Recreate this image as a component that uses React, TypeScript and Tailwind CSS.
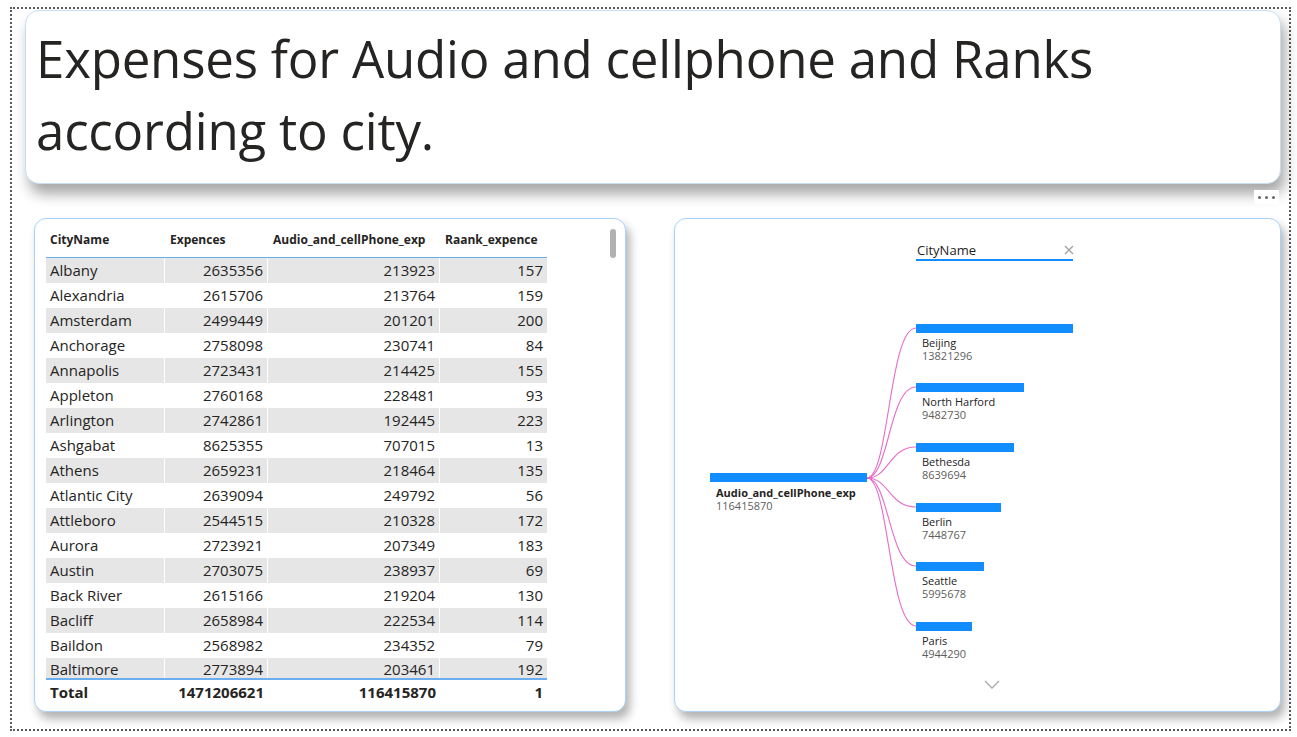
import React from 'react';

const rows: [string, string, string, string][] = [
  ['Albany', '2635356', '213923', '157'],
  ['Alexandria', '2615706', '213764', '159'],
  ['Amsterdam', '2499449', '201201', '200'],
  ['Anchorage', '2758098', '230741', '84'],
  ['Annapolis', '2723431', '214425', '155'],
  ['Appleton', '2760168', '228481', '93'],
  ['Arlington', '2742861', '192445', '223'],
  ['Ashgabat', '8625355', '707015', '13'],
  ['Athens', '2659231', '218464', '135'],
  ['Atlantic City', '2639094', '249792', '56'],
  ['Attleboro', '2544515', '210328', '172'],
  ['Aurora', '2723921', '207349', '183'],
  ['Austin', '2703075', '238937', '69'],
  ['Back River', '2615166', '219204', '130'],
  ['Bacliff', '2658984', '222534', '114'],
  ['Baildon', '2568982', '234352', '79'],
  ['Baltimore', '2773894', '203461', '192'],
];

const children = [
  { name: 'Beijing', value: '13821296', y: 105, w: 157 },
  { name: 'North Harford', value: '9482730', y: 164, w: 108 },
  { name: 'Bethesda', value: '8639694', y: 224, w: 98 },
  { name: 'Berlin', value: '7448767', y: 284, w: 85 },
  { name: 'Seattle', value: '5995678', y: 343, w: 68 },
  { name: 'Paris', value: '4944290', y: 403, w: 56 },
];

const font = { fontFamily: '"Open Sans", "Noto Sans", sans-serif' };

function ExpenseTable() {
  return (
    <div className="relative h-[494px] w-[592px] rounded-[12px] border border-[#a8d2f8] bg-white pl-[11px] pt-[9px] shadow-[4px_7px_10px_rgba(0,0,0,0.3)]">
      <div className="absolute left-[575px] top-[10px] h-[29px] w-[6px] rounded-full bg-[#b1b1b1]" />
      <div className="w-[501px] text-[#252423]">
        <div className="flex h-[30px] items-center border-b border-[#6aaef0] pb-[6px] text-[12px] font-bold">
          <div className="w-[119px] pl-[4px]">CityName</div>
          <div className="w-[103px] pl-[5px]">Expences</div>
          <div className="w-[172px] pl-[5px]">Audio_and_cellPhone_exp</div>
          <div className="w-[107px] pl-[5px]">Raank_expence</div>
        </div>
        <div className="text-[15px]">
          {rows.map((r, i) => {
            const last = i === rows.length - 1;
            return (
              <div
                key={r[0]}
                className={`flex ${last ? 'h-[20px] leading-[23px]' : 'h-[25px] leading-[25px]'} ${i % 2 === 0 ? 'bg-[#e6e6e6]' : 'bg-white'}`}
              >
                <div className="h-full w-[119px] border-r border-white pl-[4px]">{r[0]}</div>
                <div className="h-full w-[103px] border-r border-white pr-[4px] text-right">{r[1]}</div>
                <div className="h-full w-[172px] border-r border-white pr-[4px] text-right">{r[2]}</div>
                <div className="h-full w-[107px] pr-[4px] text-right">{r[3]}</div>
              </div>
            );
          })}
        </div>
        <div className="flex h-[26px] items-end border-t-2 border-[#6aaef0] pb-[2px] text-[15px] font-bold leading-[20px]">
          <div className="w-[119px] pl-[4px]">Total</div>
          <div className="w-[103px] pr-[4px] text-right">1471206621</div>
          <div className="w-[172px] pr-[4px] text-right">116415870</div>
          <div className="w-[107px] pr-[4px] text-right">1</div>
        </div>
      </div>
    </div>
  );
}

function DecompTree() {
  const rootX = 192;
  const rootY = 259;
  return (
    <div className="relative h-[494px] w-[607px] rounded-[12px] border border-[#a8d2f8] bg-white shadow-[4px_7px_10px_rgba(0,0,0,0.3)]">
      <svg width="607" height="494" className="absolute left-0 top-0" style={font}>
        <text x="242" y="36" fontSize="13" fill="#252423">CityName</text>
        <path d="M390 27 L398 35 M398 27 L390 35" stroke="#a0a0a0" strokeWidth="1.3" />
        <rect x="241" y="40" width="157" height="2" fill="#118dff" />

        {children.map((c) => (
          <path
            key={c.name}
            d={`M${rootX} ${rootY} C ${rootX + 22} ${rootY}, ${rootX + 22} ${c.y + 4}, 241 ${c.y + 4}`}
            fill="none"
            stroke="#e66cc8"
            strokeWidth="1.1"
          />
        ))}

        <rect x="35" y="254" width="157" height="9" fill="#118dff" />
        <text x="41" y="278" fontSize="11" fontWeight="700" fill="#252423">Audio_and_cellPhone_exp</text>
        <text x="41" y="291" fontSize="11" fill="#605e5c">116415870</text>

        {children.map((c) => (
          <g key={c.name + 'b'}>
            <rect x="241" y={c.y} width={c.w} height="9" fill="#118dff" />
            <text x="247" y={c.y + 23} fontSize="11" fill="#252423">{c.name}</text>
            <text x="247" y={c.y + 36} fontSize="11" fill="#605e5c">{c.value}</text>
          </g>
        ))}

        <path d="M310 462 L317 469 L324 462" fill="none" stroke="#a8a8a8" strokeWidth="1.3" />
      </svg>
    </div>
  );
}

export default function App() {
  return (
    <div className="h-[737px] w-[1297px] bg-white pl-[10px] pt-[7px]" style={font}>
      <div className="h-[724px] w-[1281px] border-2 border-dotted border-[#5a5a5a]">
        <div className="ml-[13px] mt-[1px] h-[174px] w-[1256px] rounded-[14px] border border-[#c6ddf3] bg-white pl-[10px] pt-[11px] shadow-[4px_10px_14px_rgba(0,0,0,0.35)]">
          <div className="text-[51px] leading-[72px] tracking-[-0.2px] text-[#252423]">
            Expenses for Audio and cellphone and Ranks
            <br />
            according to city.
          </div>
        </div>
        <div className="flex h-[34px] items-start justify-end pr-[10px] pt-[6px]">
          <div className="flex h-[14px] items-center gap-[4px] bg-white px-[4px]">
            <span className="h-[3px] w-[3px] rounded-full bg-[#666]" />
            <span className="h-[3px] w-[3px] rounded-full bg-[#666]" />
            <span className="h-[3px] w-[3px] rounded-full bg-[#666]" />
          </div>
        </div>
        <div className="ml-[22px] flex gap-[48px]">
          <ExpenseTable />
          <DecompTree />
        </div>
      </div>
    </div>
  );
}
